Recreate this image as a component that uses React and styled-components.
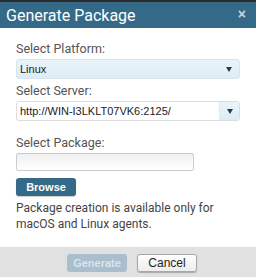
import styled, { createGlobalStyle } from "styled-components";

const GlobalStyle = createGlobalStyle`
  html, body {
    margin: 0;
    padding: 0;
    background: #ffffff;
  }
  * {
    box-sizing: border-box;
  }
`;

const Dialog = styled.div`
  width: 256px;
  height: 277px;
  display: flex;
  flex-direction: column;
  background: #ffffff;
  border-top: 2px solid #2b2b2b;
  font-family: Roboto, "Liberation Sans", sans-serif;
`;

const Header = styled.header`
  height: 26px;
  background: #346a88;
  display: flex;
  align-items: center;
  justify-content: space-between;
  padding: 0 10px 0 6px;
  color: #ffffff;
`;

const Title = styled.h1`
  margin: 0;
  font-size: 16px;
  font-weight: 400;
`;

const Close = styled.span`
  color: #c9d6de;
  font-family: "Liberation Sans", sans-serif;
  font-weight: 700;
  font-size: 14px;
  line-height: 1;
  margin-top: -2px;
`;

const Body = styled.div`
  flex: 1;
  padding: 13px 16px 0 16px;
  display: flex;
  flex-direction: column;
`;

const Label = styled.label`
  display: block;
  font-size: 12.5px;
  color: #555555;
  line-height: 15px;
  margin-top: ${(p) => p.$gap || 0}px;
  margin-bottom: 3px;
`;

const Select = styled.div`
  height: 20px;
  width: 224px;
  display: flex;
  align-items: stretch;
  border: 1px solid ${(p) => (p.$filled ? "#d6e6ee" : "#dddddd")};
  border-radius: 3px;
  background: ${(p) =>
    p.$filled ? "linear-gradient(#e9f4fa, #ddedf5)" : "#ffffff"};
  font-family: "Liberation Sans", Arial, sans-serif;
  font-size: 11px;
  color: #222222;
  overflow: hidden;
`;

const SelectText = styled.span`
  flex: 1;
  display: flex;
  align-items: center;
  padding-left: 3px;
`;

const Arrow = styled.span`
  width: 20px;
  display: flex;
  align-items: center;
  justify-content: center;
  background: ${(p) => (p.$boxed ? "linear-gradient(#eaf4fa, #ddecf4)" : "transparent")};
  border-left: ${(p) => (p.$boxed ? "1px solid #e2e8ec" : "none")};

  &::after {
    content: "";
    border-left: 3.5px solid transparent;
    border-right: 3.5px solid transparent;
    border-top: 5px solid #1d3f55;
  }
`;

const FileInput = styled.div`
  width: 178px;
  height: 18px;
  border: 1px solid #cccccc;
  border-radius: 2px;
  background: linear-gradient(#f0f0f0, #ffffff);
`;

const Browse = styled.button`
  margin-top: 7px;
  width: 60px;
  height: 18px;
  border: none;
  border-radius: 3px;
  background: #346a88;
  color: #ffffff;
  font-family: "Liberation Sans", Arial, sans-serif;
  font-weight: 700;
  font-size: 11px;
  padding: 0;
  box-shadow: 0 1px 1px rgba(0, 0, 0, 0.2);
`;

const Note = styled.p`
  margin: 4px 0 0 0;
  font-size: 12px;
  line-height: 16px;
  color: #444444;
`;

const Footer = styled.footer`
  height: 30px;
  background: #e1e1e1;
  display: flex;
  justify-content: center;
  align-items: flex-start;
  gap: 10px;
  padding-top: 7px;
  padding-left: 8px;
`;

const FooterButton = styled.button`
  width: 60px;
  height: 18px;
  padding: 0;
  border-radius: 3px;
  font-family: "Liberation Sans", Arial, sans-serif;
  font-weight: ${(p) => (p.$primary ? 700 : 400)};
  font-size: ${(p) => (p.$primary ? 11 : 12)}px;
  border: ${(p) => (p.$primary ? "none" : "1px solid #a8a8a8")};
  background: ${(p) => (p.$primary ? "#a9bfcd" : "linear-gradient(#ffffff, #ececec)")};
  color: ${(p) => (p.$primary ? "#dbe4ea" : "#222222")};
  box-shadow: ${(p) => (p.$primary ? "none" : "0 1px 1px rgba(0,0,0,0.25)")};
`;

export default function App() {
  return (
    <>
      <GlobalStyle />
      <Dialog>
        <Header>
          <Title>Generate Package</Title>
          <Close>×</Close>
        </Header>
        <Body>
          <Label>Select Platform:</Label>
          <Select $filled>
            <SelectText>Linux</SelectText>
            <Arrow />
          </Select>
          <Label $gap={4}>Select Server:</Label>
          <Select>
            <SelectText>http://WIN-I3LKLT07VK6:2125/</SelectText>
            <Arrow $boxed />
          </Select>
          <Label $gap={14}>Select Package:</Label>
          <FileInput />
          <Browse>Browse</Browse>
          <Note>Package creation is available only for macOS and Linux agents.</Note>
        </Body>
        <Footer>
          <FooterButton $primary disabled>
            Generate
          </FooterButton>
          <FooterButton>Cancel</FooterButton>
        </Footer>
      </Dialog>
    </>
  );
}
